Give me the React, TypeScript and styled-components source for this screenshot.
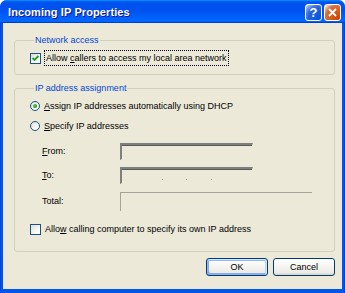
import React from "react";
import styled, { createGlobalStyle } from "styled-components";

const GlobalStyle = createGlobalStyle`
  html, body { margin: 0; padding: 0; background: #ffffff; }
  body { font-family: "Liberation Sans", Arial, sans-serif; }
  #root { width: 345px; height: 293px; }
`;

const Window = styled.div`
  width: 345px;
  height: 293px;
  box-sizing: border-box;
  display: flex;
  flex-direction: column;
  background: linear-gradient(90deg, #0831d9 0, #0055ea 1px, #0055ea 344px, #0831d9 345px);
  border-radius: 7px 7px 0 0;
  overflow: hidden;
`;

const TitleBar = styled.div`
  height: 23px;
  flex: none;
  display: flex;
  align-items: center;
  padding: 0 4px 0 8px;
  background: linear-gradient(
    180deg,
    #0997ff,
    #0053ee 8%,
    #0050ee 40%,
    #0066ff 88%,
    #0066ff 93%,
    #005bff 95%,
    #003dd7 96%,
    #003dd7
  );
`;

const Title = styled.span`
  flex: 1;
  color: #ffffff;
  font-weight: bold;
  font-size: 11px;
  letter-spacing: 0.1px;
  text-shadow: 1px 1px #0f1089;
`;

const CaptionButtons = styled.div`
  display: flex;
  gap: 2px;
  padding-top: 1px;
`;

const CaptionButton = styled.div<{ $close?: boolean }>`
  width: 17px;
  height: 17px;
  box-sizing: border-box;
  border: 1px solid #ffffff;
  border-radius: 3px;
  display: flex;
  align-items: center;
  justify-content: center;
  color: #ffffff;
  font-weight: bold;
  font-size: 13px;
  background: ${(p) =>
    p.$close
      ? "radial-gradient(circle at 90% 90%, #cc4600 0%, #dc6527 55%, #cd7546 70%, #ffccb2 90%, #ffffff 100%)"
      : "radial-gradient(circle at 90% 90%, #0054e9 0%, #2263d5 55%, #4479e4 70%, #a3bbec 90%, #ffffff 100%)"};
`;

const Body = styled.div`
  flex: 1;
  margin: 0 3px 4px 3px;
  background: #ece9d8;
  padding: 12px 7px 0 11px;
  display: flex;
  flex-direction: column;
  font-size: 9px;
  color: #000000;
`;

const Group = styled.fieldset<{ $pt: number; $pb: number }>`
  margin: 0;
  border: 1px solid #d0d0bf;
  border-radius: 3px;
  padding: ${(p) => p.$pt}px 0 ${(p) => p.$pb}px 15px;
  display: flex;
  flex-direction: column;
`;

const Legend = styled.legend`
  color: #0046d5;
  font-size: 9px;
  line-height: 10px;
  padding: 0 1px;
  margin-left: 4px;
`;

const OptionRow = styled.label<{ $mt?: number }>`
  display: flex;
  align-items: center;
  height: 14px;
  gap: 4px;
  margin-top: ${(p) => p.$mt ?? 0}px;
  white-space: nowrap;
`;

const Box = styled.span`
  width: 11px;
  height: 11px;
  box-sizing: border-box;
  border: 1px solid #1c5180;
  background: linear-gradient(135deg, #dcdcd7, #ffffff 80%);
  display: flex;
  align-items: center;
  justify-content: center;
  flex: none;
`;

const Radio = styled.span`
  width: 10px;
  height: 10px;
  box-sizing: border-box;
  border: 1px solid #1c5180;
  border-radius: 50%;
  background: linear-gradient(135deg, #dcdcd7, #ffffff 80%);
  display: flex;
  align-items: center;
  justify-content: center;
  flex: none;
`;

const RadioDot = styled.span`
  width: 4px;
  height: 4px;
  border-radius: 50%;
  background: radial-gradient(circle at 30% 30%, #55d551, #21a121 60%, #1a7f1a);
`;

const Focus = styled.span`
  outline: 1px dotted #000000;
  outline-offset: 0;
  padding: 1px 1px;
  line-height: 12px;
`;

const Key = styled.u`
  text-decoration: underline;
`;

const FieldRow = styled.div<{ $mt: number }>`
  display: flex;
  align-items: center;
  height: 20px;
  margin-top: ${(p) => p.$mt}px;
  padding-left: 12px;
`;

const FieldLabel = styled.span`
  width: 78px;
  flex: none;
`;

const IpField = styled.div`
  width: 133px;
  height: 17px;
  box-sizing: border-box;
  border-style: solid;
  border-width: 2px 1px 1px 2px;
  border-color: #7f7f7f #ece9d8 #ece9d8 #7f7f7f;
  box-shadow: inset 0 1px #5a5a55;
  background: #ece9d8;
  display: flex;
  align-items: flex-end;
  justify-content: space-around;
  padding: 0 28px 3px 28px;
`;

const Dot = styled.span`
  width: 1px;
  height: 1px;
  background: #a0a0a0;
`;

const TotalField = styled.div`
  width: 192px;
  height: 19px;
  box-sizing: border-box;
  border-style: solid;
  border-width: 1px 0 0 1px;
  border-color: #a4a39b;
`;

const ButtonRow = styled.div`
  display: flex;
  justify-content: flex-end;
  gap: 5px;
  margin-top: 6px;
`;

const Button = styled.button<{ $default?: boolean }>`
  width: 62px;
  height: 18px;
  padding: 0;
  border: 1px solid #003c74;
  border-radius: 3px;
  font-family: inherit;
  font-size: 9px;
  color: #000000;
  background: linear-gradient(180deg, #ffffff, #ecebe6 86%, #d6d0c5);
  box-shadow: ${(p) =>
    p.$default
      ? "inset -1px 1px #cee7ff, inset 1px 2px #98b8ea, inset -2px 2px #bcd4f6, inset 1px -1px #89ade4, inset 2px -2px #89ade4"
      : "none"};
`;

function Check() {
  return (
    <svg width="7" height="7" viewBox="0 0 7 7">
      <path d="M0.5 3 L2.5 5 L6.5 1" stroke="#21a121" strokeWidth="1.8" fill="none" />
    </svg>
  );
}

export default function App() {
  return (
    <>
      <GlobalStyle />
      <Window>
        <TitleBar>
          <Title>Incoming IP Properties</Title>
          <CaptionButtons>
            <CaptionButton>?</CaptionButton>
            <CaptionButton $close>
              <svg width="9" height="9" viewBox="0 0 9 9">
                <path d="M1 1 L8 8 M8 1 L1 8" stroke="#ffffff" strokeWidth="1.8" />
              </svg>
            </CaptionButton>
          </CaptionButtons>
        </TitleBar>
        <Body>
          <Group $pt={6} $pb={9}>
            <Legend>Network access</Legend>
            <OptionRow>
              <Box>
                <Check />
              </Box>
              <Focus>
                Allow <Key>c</Key>allers to access my local area network
              </Focus>
            </OptionRow>
          </Group>
          <Group $pt={6} $pb={15} style={{ marginTop: 8 }}>
            <Legend>IP address assignment</Legend>
            <OptionRow>
              <Radio>
                <RadioDot />
              </Radio>
              <span>
                <Key>A</Key>ssign IP addresses automatically using DHCP
              </span>
            </OptionRow>
            <OptionRow $mt={6}>
              <Radio />
              <span>
                <Key>S</Key>pecify IP addresses
              </span>
            </OptionRow>
            <FieldRow $mt={8}>
              <FieldLabel>
                <Key>F</Key>rom:
              </FieldLabel>
              <IpField />
            </FieldRow>
            <FieldRow $mt={4}>
              <FieldLabel>
                <Key>T</Key>o:
              </FieldLabel>
              <IpField>
                <Dot />
                <Dot />
                <Dot />
              </IpField>
            </FieldRow>
            <FieldRow $mt={6}>
              <FieldLabel>Total:</FieldLabel>
              <TotalField />
            </FieldRow>
            <OptionRow $mt={11}>
              <Box />
              <span>
                Allo<Key>w</Key> calling computer to specify its own IP address
              </span>
            </OptionRow>
          </Group>
          <ButtonRow>
            <Button $default>OK</Button>
            <Button>Cancel</Button>
          </ButtonRow>
        </Body>
      </Window>
    </>
  );
}
